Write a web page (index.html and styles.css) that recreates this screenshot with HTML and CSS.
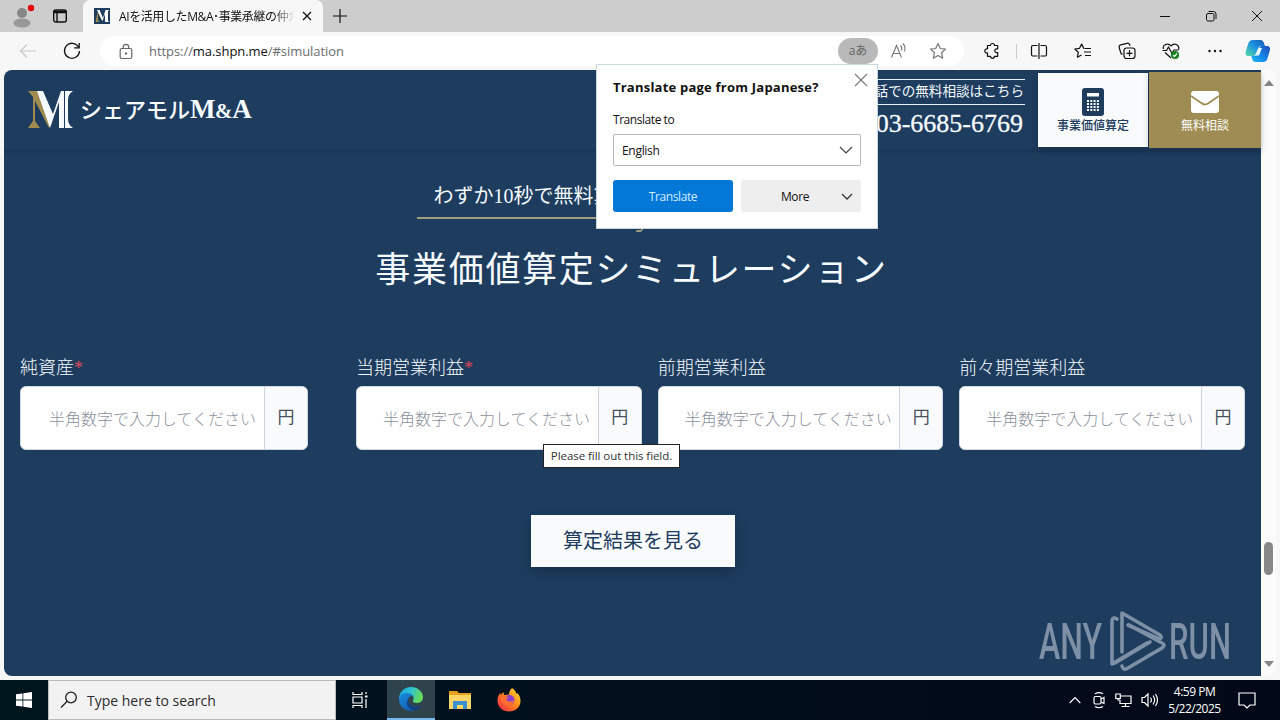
FILE: index.html
```html
<!DOCTYPE html>
<html lang="ja">
<head>
    <meta charset="UTF-8">
    <meta name="viewport" content="width=device-width, initial-scale=1.0">
    <title>AIを活用したM&amp;A・事業承継の仲介</title>
    <link rel="stylesheet" href="styles.css">
</head>
<body>

    <!-- tabs -->
    <div class="tabstrip">
        <div class="tab-tools">
            <svg class="profile" width="26" height="26" viewBox="0 0 26 26"><circle cx="12" cy="10" r="5" fill="#858585"/><ellipse cx="12" cy="20" rx="8.5" ry="4.5" fill="#999"/><circle cx="21" cy="5" r="3.2" fill="#e3000f"/></svg>
            <svg class="workspace" width="16" height="16" viewBox="0 0 16 16" fill="none" stroke="#111" stroke-width="1.4"><rect x="1.7" y="2" width="12.6" height="12" rx="2"/><path d="M2 4h12" stroke-width="2.500"/><path d="M5 5v9"/></svg>
        </div>
        <div class="tab">
            <svg width="16" height="16" viewBox="0 0 16 16"><rect width="16" height="16" fill="#1d3c5e"/><path d="M1.500 14h4L4 12V5l4 8 .5-1L4 3z" fill="#a08c50"/><path d="M3 2h2.500l3.500 8 2.500-8H15l-1 1.500v9l1 1.500h-4V6L8.500 13z" fill="#fff"/></svg>
            <span class="tab-title">AIを活用したM&amp;A･事業承継の仲介</span>
            <svg class="tab-close" width="10" height="10" viewBox="0 0 10 10" stroke="#111" stroke-width="1.3"><path d="M1 1l8 8M9 1L1 9"/></svg>
        </div>
        <svg class="new-tab" width="14" height="14" viewBox="0 0 14 14" stroke="#111" stroke-width="1.2"><path d="M7 0v14M0 7h14"/></svg>
        <div class="window-buttons">
            <svg width="12" height="12" viewBox="0 0 12 12" fill="none" stroke="#111"><path d="M1 6.500h10"/></svg>
            <svg width="12" height="12" viewBox="0 0 12 12" fill="none" stroke="#111"><rect x="1.500" y="3.500" width="7.500" height="7.500" rx="1.500"/><path d="M3.500 1.500h5a2.500 2.500 0 0 1 2.500 2.500v5"/></svg>
            <svg width="12" height="12" viewBox="0 0 12 12" fill="none" stroke="#111"><path d="M1 1l10 10M11 1L1 11"/></svg>
        </div>
    </div>

    <!-- address bar -->
    <div class="toolbar">
        <svg class="back" width="18" height="16" viewBox="0 0 18 16" fill="none" stroke="#c9c9c9" stroke-width="1.2"><path d="M17 8H2M8 1.500L1.500 8 8 14.500"/></svg>
        <svg class="reload" width="18" height="18" viewBox="0 0 18 18" fill="none" stroke="#111" stroke-width="1.3"><path d="M15.500 5A7.500 7.500 0 1 0 16.500 9M16.200 1v4.800h-5"/></svg>
        <div class="address">
            <svg class="lock" width="14" height="17" viewBox="0 0 14 17" fill="none" stroke="#666" stroke-width="1.2"><rect x="1.200" y="5.500" width="11.600" height="10" rx="1.800"/><path d="M4.300 5.500V4a2.700 2.700 0 0 1 5.400 0v1.500"/><circle cx="7" cy="10.500" r=".6" fill="#666"/></svg>
            <span class="url">https://<b>ma.shpn.me</b>/#simulation</span>
            <span class="translate-pill">aあ</span>
            <svg class="read" width="18" height="18" viewBox="0 0 18 18" fill="none" stroke="#777" stroke-width="1.1"><path d="M1.500 15.500L6.500 3.500l5 12M3.300 11.500h6.400M10.500 3.500q2 2 1 5M12.800 1.500q3.500 3.200 1.500 8"/></svg>
            <svg class="star" width="18" height="18" viewBox="0 0 18 18" fill="none" stroke="#777" stroke-width="1.2" stroke-linejoin="round"><path d="M9 1.500l2.300 5 5.200.6-3.900 3.700 1.100 5.400L9 13.500l-4.700 2.700 1.100-5.400L1.500 7.100l5.200-.6z"/></svg>
        </div>
        <div class="actions">
            <svg width="18" height="18" viewBox="0 0 18 18"><path d="M4.500 3.500h3a2 2 0 0 1 4 0h3.200v3.300h-1a1.900 1.900 0 0 0 0 3.800h1v3.700h-3.200a2 2 0 0 1-4 0h-3v-3.400a2.100 2.100 0 1 1 0-4z"/></svg>
            <i class="divider"></i>
            <svg width="18" height="18" viewBox="0 0 18 18"><path d="M7.500 3.500H3A1.500 1.500 0 0 0 1.500 5v7.500A1.500 1.500 0 0 0 3 14h4.500M10.500 3.500H15A1.500 1.500 0 0 1 16.500 5v7.500A1.500 1.500 0 0 1 15 14h-4.500M9 1v16"/></svg>
            <svg width="18" height="18" viewBox="0 0 18 18"><path d="M10.500 6.500H9.800L7.700 2 5.500 6.300l-4.700.7 3.500 3.300-.9 4.900 4.100-2.300M11 6.500h6M10 10h7M11 13.500h6"/></svg>
            <svg width="18" height="18" viewBox="0 0 18 18"><rect x="6" y="6" width="11" height="10.500" rx="2.500"/><path d="M11.500 8.300v6M8.500 11.300h6M4.500 12.500Q3 12 2.500 10L1.200 5.500Q.8 3.500 2.800 2.800L9 1.300q2-.4 2.700 1.500l.3 1"/></svg>
            <svg width="18" height="18" viewBox="0 0 18 18"><path d="M1.500 7C0 3 6 0 9 4c3-4 9-1 7.500 3.500M.5 8.500h4L6.500 5l3.500 6.500 2-3.500h4.500M3 10.500l6 5.500"/><circle cx="13" cy="13" r="4.100" fill="#13811b" stroke="none"/><path d="M11 13.200l1.500 1.300 2.500-3" stroke="#fff"/></svg>
            <svg width="18" height="18" viewBox="0 0 18 18"><g fill="#111" stroke="none"><circle cx="3.500" cy="9" r="1.200"/><circle cx="9" cy="9" r="1.200"/><circle cx="14.500" cy="9" r="1.200"/></g></svg>
            <svg class="copilot" width="26" height="24" viewBox="0 0 26 24">
                <defs>
                    <linearGradient id="cpA" x1="1" y1="0" x2="0" y2="1"><stop offset="0" stop-color="#1258b0"/><stop offset=".45" stop-color="#1d8fe0"/><stop offset="1" stop-color="#55dca5"/></linearGradient>
                    <linearGradient id="cpB" x1="0" y1="1" x2="1" y2="0"><stop offset="0" stop-color="#1bbcf0"/><stop offset=".45" stop-color="#1787ea"/><stop offset="1" stop-color="#1b4fb8"/></linearGradient>
                </defs>
                <path d="M8 1h7.500q2.300 0 3 2l1.500 4h-4q-2 0-2.700 2l-2 5.500Q10.300 17 8 17H4q-4.500 0-3.300-4.500L3.500 4Q4.500 1 8 1z" fill="url(#cpA)"/>
                <path d="M18 23h-7.500q-2.300 0-3-2L6.300 17H9q2.300 0 3.200-2.500l2-5.500q.7-2 2.700-2H22q4 0 2.800 4.500l-2.500 8.500Q21.300 23 18 23z" fill="url(#cpB)"/>
                <path d="M13.500 9h3.500l-3 7.500h-4z" fill="#e9f7ff"/>
            </svg>
        </div>
    </div>

    <div class="window">
        <div class="page">
            <header class="site-header">
                <div class="logo">
                    <svg width="45" height="37" viewBox="0 0 45 37">
                        <path d="M0 0h10l14 28-3 9L7 10v20l5 7H0l5-7V6z" fill="#a08c50"/>
                        <path d="M9 0h6l10 23L33 0h3v37h-5V11l-9 26z" fill="#f5fafd"/>
                        <path d="M37 0h8q-5 3-5 9v19q0 6 5 9h-8z" fill="#f5fafd"/>
                    </svg>
                    <span class="logo-name">シェアモル<span class="logo-ma">M<small>&amp;</small>A</span></span>
                </div>
                <div class="phone">
                    <p class="phone-note">お電話での無料相談はこちら</p>
                    <p class="phone-number">03-6685-6769</p>
                </div>
                <a class="head-button valuation">
                    <svg width="22" height="28" viewBox="0 0 22 28"><rect width="22" height="28" rx="3" fill="#1d3c5e"/><rect x="5" y="5" width="12" height="3.500" fill="#f8fafc"/><g stroke="#f8fafc" stroke-width="2" stroke-dasharray="2 1.3"><path d="M5 13h12M5 16h12M5 19h12M5 22h12"/></g></svg>
                    <span>事業価値算定</span>
                </a>
                <a class="head-button contact">
                    <svg width="28" height="22" viewBox="0 0 28 22"><rect width="28" height="22" rx="3" fill="#fff"/><path d="M0 5l11 7.500q3 2 6 0L28 5" fill="none" stroke="#9e8c52" stroke-width="1.800"/></svg>
                    <span>無料相談</span>
                </a>
            </header>

            <main>
                <p class="lead">わずか10秒で無料算定</p>
                <h1>事業価値算定シミュレーション</h1>

                <form class="simulation">
                    <label class="field">
                        <span class="label">純資産<em>*</em></span>
                        <span class="input-group"><input type="text" placeholder="半角数字で入力してください"><span class="unit">円</span></span>
                    </label>
                    <div class="profits">
                        <label class="field">
                            <span class="label">当期営業利益<em>*</em></span>
                            <span class="input-group"><input type="text" placeholder="半角数字で入力してください"><span class="unit">円</span></span>
                        </label>
                        <label class="field">
                            <span class="label">前期営業利益</span>
                            <span class="input-group"><input type="text" placeholder="半角数字で入力してください"><span class="unit">円</span></span>
                        </label>
                        <label class="field">
                            <span class="label">前々期営業利益</span>
                            <span class="input-group"><input type="text" placeholder="半角数字で入力してください"><span class="unit">円</span></span>
                        </label>
                    </div>
                </form>
                <button class="submit" type="button">算定結果を見る</button>
            </main>
        </div>
        <div class="scrollbar">
            <svg width="10" height="6" viewBox="0 0 10 6"><path d="M0 6l5-6 5 6z" fill="#858585"/></svg>
            <i class="thumb"></i>
            <svg width="10" height="6" viewBox="0 0 10 6"><path d="M0 0l5 6 5-6z" fill="#858585"/></svg>
        </div>
    </div>

    <!-- taskbar -->
    <div class="taskbar">
        <div class="start">
            <svg width="16" height="16" viewBox="0 0 16 16" fill="#fff"><path d="M0 2.300l6.500-.9v6.100H0zM7.300 1.300L16 0v7.500H7.300zM0 8.400h6.500v6.200L0 13.700zM7.300 8.400H16V16l-8.700-1.300z"/></svg>
        </div>
        <div class="search">
            <svg width="18" height="18" viewBox="0 0 18 18" fill="none" stroke="#222" stroke-width="1.3"><circle cx="11" cy="6.500" r="5.300"/><path d="M7.200 10.300L1 16.500"/></svg>
            <span>Type here to search</span>
        </div>
        <div class="apps">
            <div class="app task-view">
                <svg width="18" height="18" viewBox="0 0 18 18" fill="none" stroke="#fff" stroke-width="1.2"><path d="M2 1v2.500h9V1M2 17v-2.500h9V17M2 6h9v6H2zM15 1v2M15 8v9"/><path d="M14 5.500h2.500" stroke-width="2"/></svg>
            </div>
            <div class="app active">
                <svg width="24" height="24" viewBox="0 0 24 24">
                    <defs>
                        <linearGradient id="edA" x1="0" y1="0" x2="1" y2=".3"><stop offset="0" stop-color="#1b9de2"/><stop offset=".5" stop-color="#2bc3d2"/><stop offset="1" stop-color="#64db5c"/></linearGradient>
                        <linearGradient id="edB" x1="0" y1="0" x2="1" y2="1"><stop offset="0" stop-color="#1a8fe0"/><stop offset="1" stop-color="#104a9c"/></linearGradient>
                    </defs>
                    <path d="M0 12C0 5 5 0 12 0s12 5 12 10c0 4-3 6-6 6-3.500 0-4.500-1.500-4-2.500 1.500-2.500 0-6-4-6C5 7.500 1 11 0 12z" fill="url(#edA)"/>
                    <path d="M0 12c0-3 3-6 8-6 4 0 6 2 7 4-2-2-6-.5-6 3.500 0 5 6 8 13 5C19.500 22 16 24 12 24 5 24 0 19 0 12z" fill="url(#edB)"/>
                    <path d="M9 13c-3 3 0 9 6 10.500 3.500-.8 6-3 7-5-6 3-13 .5-13-5.500z" fill="#123f82"/>
                </svg>
            </div>
            <div class="app">
                <svg width="22" height="20" viewBox="0 0 22 20"><path d="M0 1h8l2 2h12v5H0z" fill="#e6a01f"/><path d="M0 5h22v14H0z" fill="#fbd667"/><path d="M4 19v-8h14v8h-4v-4H8v4z" fill="#3b8fd0"/></svg>
            </div>
            <div class="app">
                <svg width="24" height="24" viewBox="0 0 24 24">
                    <defs><linearGradient id="ffA" x1="1" y1="0" x2="0" y2="1"><stop offset="0" stop-color="#ffe53b"/><stop offset=".45" stop-color="#ff8a1c"/><stop offset="1" stop-color="#f0204f"/></linearGradient></defs>
                    <path d="M15 0c3 2 4 4 4.500 6l1-1c2 2 3 5 3 8 0 6-5 10.500-11.500 10.500S.5 19 .5 12.500C.5 9 2 6 3.500 4.500V7l3-3 .5 3 5-.5C12 4 13 2 15 0z" fill="url(#ffA)"/>
                    <circle cx="12.500" cy="12" r="5" fill="#8a3fd0"/>
                    <path d="M4 9c3-2 6-1 8 1-3-.5-3 2-1 3 3 1.500 5-.5 6-1-.5 4-4 6-7 5.500S4 14 4 9z" fill="#ff7030"/>
                </svg>
            </div>
        </div>
        <div class="tray">
            <svg width="12" height="8" viewBox="0 0 12 8"><path d="M.7 7L6 1.500 11.300 7"/></svg>
            <svg width="14" height="18" viewBox="0 0 14 18"><rect x="2" y="5.500" width="7" height="7.500" rx="1.500"/><path d="M9 8l3-1.500v6L9 11M3 2.800q4-2.500 8 0M3 15.500q4 2.500 8 0"/></svg>
            <svg width="17" height="15" viewBox="0 0 17 15"><path d="M6 3h10v7.500H5V7M.8 1h4.500v4.500H.8zM3 5.500V7h2M10.500 10.500v3M6.500 13.500h8"/></svg>
            <svg width="18" height="16" viewBox="0 0 18 16"><path d="M1 5.500h2.500L7 2v12l-3.500-3.500H1zM9.500 5.500q1.800 2.500 0 5M12 3.500q3.300 4.500 0 9M14.500 2q4 6 0 12"/></svg>
            <div class="clock"><span>4:59 PM</span><span>5/22/2025</span></div>
            <svg class="notice" width="18" height="17" viewBox="0 0 18 17"><path d="M1 1h16v12h-5l-3 3-3-3H1z"/></svg>
        </div>
    </div>

    <!-- translate popup -->
    <div class="popup">
        <svg class="popup-close" width="14" height="14" viewBox="0 0 14 14" stroke="#777" stroke-width="1.1"><path d="M1 1l12 12M13 1L1 13"/></svg>
        <h2>Translate page from Japanese?</h2>
        <p>Translate to</p>
        <div class="select">
            <span>English</span>
            <svg width="14" height="8" viewBox="0 0 14 8" fill="none" stroke="#444" stroke-width="1.2"><path d="M1 1l6 6 6-6"/></svg>
        </div>
        <div class="popup-buttons">
            <button class="primary" type="button">Translate</button>
            <button class="more" type="button"><span>More</span><svg width="12" height="7" viewBox="0 0 12 7" fill="none" stroke="#333" stroke-width="1.3"><path d="M1 1l5 5 5-5"/></svg></button>
        </div>
    </div>

    <div class="tooltip">Please fill out this field.</div>

    <svg class="watermark" width="200" height="64" viewBox="0 0 200 64">
        <text x="1" y="50" textLength="63" lengthAdjust="spacingAndGlyphs">ANY</text>
        <text x="131" y="50" textLength="62" lengthAdjust="spacingAndGlyphs">RUN</text>
        <g class="mark">
            <path d="M79 10q-5-3-5 3v42l35-21"/>
            <path d="M84 43V4l38 22q3 3-1 4L90 16"/>
            <path d="M84 57q1 5 6 2l34-20q4-3 0-5L91 16M84 57"/>
            <path d="M77 54l35-21"/>
        </g>
    </svg>

</body>
</html>
```

FILE: styles.css
```css
* { box-sizing: border-box; }
body { margin: 0; width: 1280px; height: 720px; overflow: hidden; background: #f7f7f7; font-family: "Open Sans", "Noto Sans CJK JP", sans-serif; color: #111; }
p, h1, h2 { margin: 0; }
svg { display: block; flex: none; }

/* tabs */
.tabstrip { display: flex; height: 32px; background: #cdcdcd; }
.tab-tools { display: flex; align-items: center; width: 83px; padding-left: 10px; }
.workspace { margin-left: 16px; }
.tab { display: flex; align-items: center; width: 240px; padding: 0 11px; background: #f7f7f7; border-radius: 7px 7px 0 0; }
.tab-title { width: 176px; margin-left: 9px; overflow: hidden; white-space: nowrap; font-size: 12px; letter-spacing: -0.4px; -webkit-mask-image: linear-gradient(to right, #000 88%, transparent); mask-image: linear-gradient(to right, #000 88%, transparent); }
.tab-close { margin-left: 7px; }
.new-tab { margin: 9px 0 0 10px; }
.window-buttons { display: flex; align-items: center; gap: 34px; margin-left: auto; padding-right: 17px; }

/* address bar */
.toolbar { display: flex; align-items: center; height: 38px; padding-left: 19px; }
.reload { margin-left: 26px; }
.address { display: flex; align-items: center; width: 864px; height: 30px; margin-left: 19px; padding-left: 19px; border-radius: 15px; background: #fff; }
.url { margin-left: 16px; font-size: 13px; letter-spacing: -0.06px; color: #6c6c6c; }
.url b { font-weight: 400; color: #111; }
.translate-pill { width: 40px; height: 26px; margin-left: auto; border-radius: 13px; background: #b9b9b9; color: #666; font-size: 12px; line-height: 25px; text-align: center; }
.read { margin-left: 12px; }
.star { margin: 0 17px 0 21px; }
.actions { display: flex; align-items: center; flex: 1; padding-left: 19px; }
.actions svg { margin-right: 26px; fill: none; stroke: #111; stroke-width: 1.2; stroke-linejoin: round; }
.actions .divider { width: 1px; height: 15px; margin: 0 13px 0 -11px; background: #ccc; }
.actions .copilot { margin: 0 0 0 -5px; stroke: none; }

/* page */
.window { display: flex; height: 606px; margin: 0 4px; border-radius: 8px; overflow: hidden; background: #fbfbfb; }
.page { width: 1257px; background: #1d3c5e; color: #f5fbff; font-family: "Liberation Serif", "Noto Sans CJK JP", serif; }
.scrollbar { display: flex; flex-direction: column; align-items: center; width: 15px; padding: 10px 0 9px; }
.scrollbar .thumb { width: 9px; height: 33px; margin: 456px 0 auto; border-radius: 5px; background: #888; }

.site-header { display: flex; height: 81px; border-bottom: 1px solid #1a3654; box-shadow: 0 1px 3px rgba(0,0,0,.12); }
.logo { display: flex; align-items: flex-start; padding: 21px 0 0 24px; }
.logo-name { margin-left: 7px; font-size: 22px; font-weight: 500; line-height: 37px; white-space: nowrap; }
.logo-ma { font-size: 27px; font-weight: 700; letter-spacing: -0.4px; }
.logo-ma small { font-size: 21px; }
.phone { margin: 9px 13px 0 auto; text-align: right; white-space: nowrap; }
.phone-note { height: 26px; padding-right: 1px; border: solid #e8f0f6; border-width: 1px 0; font-size: 13.6px; line-height: 24px; }
.phone-number { padding-right: 2px; font-size: 26px; line-height: 37px; -webkit-text-stroke: 0.3px; }
.head-button { display: flex; flex-direction: column; align-items: center; width: 110px; height: 74px; margin-top: 3px; font-size: 12px; line-height: 14px; }
.valuation { padding-top: 15px; background: #f8fafc; color: #1d3c5e; box-shadow: 0 3px 7px rgba(0,0,0,.18); }
.valuation span { margin-top: 3px; font-weight: 500; }
.contact { width: 112px; height: 76px; margin: 2px 0 0 1px; padding-top: 19px; background: #9e8c52; color: #fff; box-shadow: 0 3px 7px rgba(0,0,0,.18); }
.contact span { margin-top: 6px; }

main { display: flex; flex-direction: column; align-items: center; }
.lead { position: relative; width: 432px; height: 43px; margin-top: 25px; padding-left: 17px; border-bottom: 2px solid #a09c80; font-size: 20px; line-height: 40px; white-space: nowrap; }
/* tail of the bubble under the line */
.lead::after { content: ""; position: absolute; left: 214px; top: 42px; width: 12px; height: 12px; border: solid #a09c80; border-width: 0 2px 2px 0; transform: skewX(-25deg); border-radius: 0 0 2px 0; clip-path: inset(0 0 0 8px); }
h1 { margin-top: 28px; padding-right: 2px; font-size: 35px; font-weight: 400; letter-spacing: 1.7px; line-height: 48px; }
.simulation { display: flex; align-self: stretch; gap: 48px; margin-top: 61px; padding: 0 16px; }
.simulation > .field { width: 288px; }
.profits { display: grid; grid-template-columns: repeat(3, 1fr); flex: 1; gap: 16px; }
.field { display: block; }
.label { display: block; height: 30px; font-size: 18px; font-weight: 300; line-height: 24px; white-space: nowrap; }
.label em { color: #e0485a; font-style: normal; }
.input-group { display: flex; height: 64px; border: 1px solid #cfd9e3; border-radius: 6px; background: #fff; overflow: hidden; }
.input-group input { flex: 1; min-width: 0; padding: 3px 0 0 28px; border: 0; background: #fff; font: 300 16px "Liberation Serif", "Noto Sans CJK JP", serif; }
.profits .input-group input { padding-left: 26px; }
.input-group input::placeholder { color: #8a909b; }
.unit { width: 43px; border-left: 1px solid #cbd3dc; background: #f8fafc; color: #475060; font-size: 17px; line-height: 61px; text-align: center; }
.submit { width: 204px; height: 52px; margin-top: 65px; padding: 0 0 3px 1px; border: 0; background: #f8fafc; color: #1d3c5e; font: 20px "Liberation Serif", "Noto Sans CJK JP", serif; box-shadow: 0 5px 12px rgba(0,0,0,.2); }

/* taskbar */
.taskbar { display: flex; height: 40px; margin-top: 4px; background: linear-gradient(to right, #00161f, #020d1c 60%, #020817); }
.start { display: flex; align-items: center; justify-content: center; width: 48px; }
.search { display: flex; align-items: center; width: 288px; padding-left: 11px; border: 1px solid #bbb; background: #f2f2f2; }
.search span { margin-left: 9px; font-size: 14px; color: #2b2b2b; white-space: nowrap; }
.apps { display: flex; }
.app { display: flex; align-items: center; justify-content: center; width: 49px; }
.app.task-view { width: 51px; padding-right: 3px; }
.app.active { width: 48px; border-bottom: 2px solid #76b9ed; background: #2f434c; }
.tray { display: flex; align-items: center; gap: 9px; margin-left: auto; padding-right: 24px; }
.tray svg { fill: none; stroke: #fff; stroke-width: 1.2; }
.tray svg:first-child { margin-right: 2px; }
.clock { display: flex; flex-direction: column; width: 53px; color: #fff; font-size: 12px; line-height: 17px; letter-spacing: -0.5px; text-align: center; white-space: nowrap; }
.tray .notice { margin-left: 8px; }

/* things over the page */
.popup { position: absolute; left: 596px; top: 64px; width: 282px; height: 165px; padding: 14px 16px; border: 1px solid #c9d8df; background: #fff; font-size: 12px; }
.popup-close { position: absolute; right: 9px; top: 8px; }
.popup h2 { font-size: 13px; line-height: 16px; height: 18px; letter-spacing: 0.22px; white-space: nowrap; }
.popup p { margin-top: 14px; line-height: 18px; letter-spacing: -0.45px; }
.select { display: flex; align-items: center; justify-content: space-between; width: 248px; height: 32px; margin-top: 5px; padding: 0 7px 0 8px; border: 1px solid #b8b8b8; border-radius: 2px; letter-spacing: -0.3px; }
.popup-buttons { display: flex; gap: 8px; width: 248px; margin-top: 14px; }
.popup-buttons button { width: 120px; height: 32px; padding: 0; border: 0; border-radius: 3px; font: 12px "Open Sans", sans-serif; letter-spacing: -0.4px; }
.popup-buttons .primary { background: #0378d7; color: #d5ecff; }
.popup-buttons .more { display: flex; align-items: center; background: #eee; color: #111; }
.more span { width: 100px; padding-left: 8px; }
.tooltip { position: absolute; left: 543px; top: 444px; width: 137px; height: 24px; border: 1px solid #222; background: #fff; font-size: 11.5px; line-height: 22px; letter-spacing: -0.06px; text-align: center; white-space: nowrap; color: #333; }
.watermark { position: absolute; left: 1038px; top: 609px; opacity: .85; }
.watermark text { fill: #8f9fb2; font: 500 50px Roboto, sans-serif; }
.watermark .mark { fill: none; stroke: #8f9fb2; stroke-width: 3.6; stroke-linecap: round; stroke-linejoin: round; }
```
